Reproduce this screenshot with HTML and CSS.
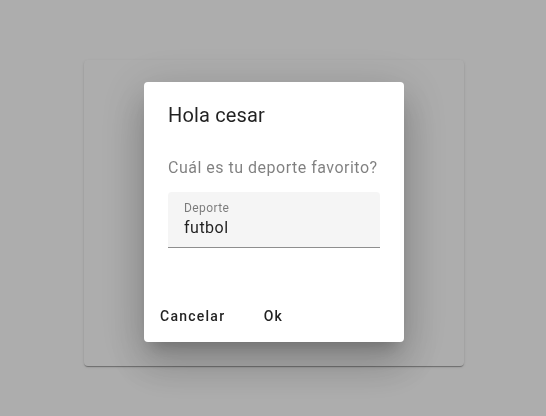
FILE: index.html
```html
<!DOCTYPE html>
<html lang="es">
<head>
<meta charset="utf-8">
<link rel="stylesheet" href="styles.css">
</head>
<body>
<main class="page">
  <section class="card"></section>
</main>
<div class="overlay">
  <div class="dialog">
    <h2 class="title">Hola cesar</h2>
    <div class="content">
      <p class="question">Cuál es tu deporte favorito?</p>
      <div class="field">
        <span class="label">Deporte</span>
        <span class="value">futbol</span>
      </div>
    </div>
    <div class="actions">
      <button class="btn btn-cancel">Cancelar</button>
      <button class="btn btn-ok">Ok</button>
    </div>
  </div>
</div>
</body>
</html>
```
FILE: styles.css
```css
html, body {
  margin: 0;
  padding: 0;
  background: #ffffff;
  font-family: Roboto, "Liberation Sans", sans-serif;
}
.page {
  padding: 60px 0 0 84px;
  height: 416px;
  box-sizing: border-box;
}
.card {
  width: 380px;
  height: 306px;
  background: #fff;
  border-radius: 4px;
  box-shadow: 0 2px 1px -1px rgba(0,0,0,.2), 0 1px 1px 0 rgba(0,0,0,.14), 0 1px 3px 0 rgba(0,0,0,.12);
}
.overlay {
  position: fixed;
  inset: 0;
  background: rgba(0,0,0,.32);
  display: flex;
  align-items: flex-start;
  justify-content: flex-start;
  padding: 82px 0 0 144px;
}
.dialog {
  width: 260px;
  height: 260px;
  box-sizing: border-box;
  background: #fff;
  border-radius: 4px;
  box-shadow: 0 11px 15px -7px rgba(0,0,0,.2), 0 24px 38px 3px rgba(0,0,0,.14), 0 9px 46px 8px rgba(0,0,0,.12);
  display: flex;
  flex-direction: column;
}
.title {
  margin: 0;
  padding: 17px 24px 0;
  font-size: 20px;
  font-weight: 400;
  line-height: 32px;
  letter-spacing: .15px;
  color: rgba(0,0,0,.87);
}
.content {
  padding: 25px 24px 0;
  flex: 1;
}
.question {
  margin: 0;
  font-size: 16px;
  line-height: 24px;
  letter-spacing: .5px;
  color: rgba(0,0,0,.5);
}
.field {
  margin-top: 12px;
  height: 56px;
  box-sizing: border-box;
  background: #f5f5f5;
  border-radius: 4px 4px 0 0;
  border-bottom: 1px solid rgba(0,0,0,.42);
  padding: 8px 16px 0;
  display: flex;
  flex-direction: column;
}
.label {
  font-size: 12px;
  line-height: 16px;
  letter-spacing: .4px;
  color: rgba(0,0,0,.5);
}
.value {
  margin-top: 1px;
  font-size: 16px;
  line-height: 22px;
  letter-spacing: .5px;
  color: rgba(0,0,0,.87);
}
.actions {
  display: flex;
  align-items: center;
  padding: 8px;
  gap: 8px;
}
.btn {
  height: 36px;
  min-width: 64px;
  padding: 0 8px;
  border: none;
  background: transparent;
  font-family: Roboto, "Liberation Sans", sans-serif;
  font-size: 14px;
  font-weight: 500;
  letter-spacing: 1.25px;
  color: rgba(0,0,0,.87);
  border-radius: 4px;
}
```
